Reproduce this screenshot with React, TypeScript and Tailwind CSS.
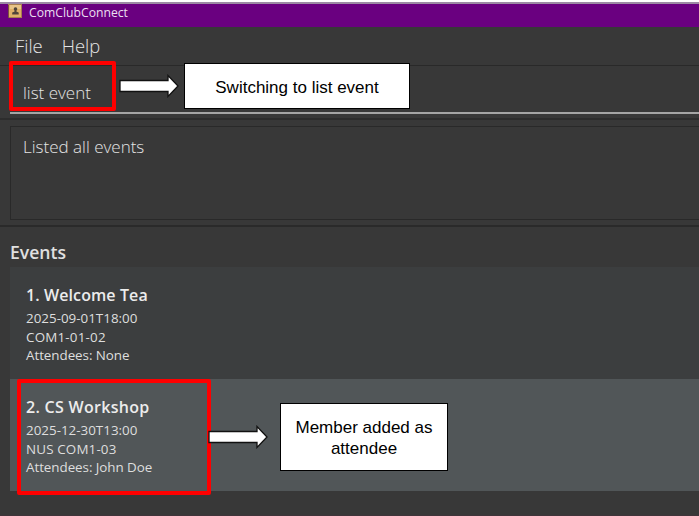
import type { ReactNode } from "react";

type ClubEvent = { title: string; date: string; place: string; attendees: string; selected: boolean };

const events: ClubEvent[] = [
  { title: "1. Welcome Tea", date: "2025-09-01T18:00", place: "COM1-01-02", attendees: "Attendees: None", selected: false },
  { title: "2. CS Workshop", date: "2025-12-30T13:00", place: "NUS COM1-03", attendees: "Attendees: John Doe", selected: true },
];

function AppIcon() {
  return (
    <svg width="15" height="15" viewBox="0 0 15 15" className="shrink-0">
      <rect x="0" y="0" width="14" height="14" fill="#a87f4e" />
      <rect x="1" y="1" width="12" height="12" fill="#deb068" />
      <rect x="2" y="1" width="11" height="4" fill="#e8c488" />
      <path d="M7.500 3.200a1.800 1.800 0 0 1 1.100 3.200c-.3.400-.3 1 .2 1.300l1.900.700v2.100H4.200V8.400l2-.7c.5-.3.5-.9.2-1.300A1.800 1.800 0 0 1 7.500 3.200z" fill="#51453a" />
      <path d="M.5 1v13" stroke="#7c5340" strokeWidth="1" />
    </svg>
  );
}

function Arrow({ className }: { className: string }) {
  return (
    <svg width="61" height="24" viewBox="0 0 61 24" className={"absolute " + className}>
      <path d="M1 6.500h48V1.500L59 12 49 22.500V17.500H1z" fill="#fff" stroke="#111" strokeWidth="1.300" />
    </svg>
  );
}

function Callout({ className, children }: { className: string; children: ReactNode }) {
  return (
    <div className={"absolute flex items-center justify-center border border-black bg-white pt-0.5 text-center font-['Liberation_Sans',Arial,sans-serif] text-[17px] leading-[21px] text-black " + className}>
      {children}
    </div>
  );
}

function EventCard({ event }: { event: ClubEvent }) {
  return (
    <li className={"h-28 pt-[17px] pl-4 text-[#dedede] " + (event.selected ? "bg-[#515658]" : "bg-[#3c3e3f]")}>
      <h2 className={"h-[25px] text-[16px] leading-[22px] font-semibold whitespace-nowrap text-[#ececec] " + (event.selected ? "tracking-[0.3px]" : "tracking-[0.1px]")}>{event.title}</h2>
      <div className="text-[13.400px] leading-[18.500px] whitespace-nowrap">
        <p>{event.date}</p>
        <p className={event.selected ? "tracking-[0.15px]" : "tracking-[0.2px]"}>{event.place}</p>
        <p className="tracking-[-0.05px]">{event.attendees}</p>
      </div>
    </li>
  );
}

export default function App() {
  return (
    <div className="relative flex h-[516px] w-[699px] flex-col overflow-hidden bg-[#383838] font-['Open_Sans','Noto_Sans',sans-serif]">
      <header className="flex h-[27px] shrink-0 items-start border-t-2 border-white bg-[#6a0080]">
        <div className="flex h-full w-full items-start border-t-2 border-[#9c8aa4] pl-2">
          <AppIcon />
          <span className="ml-1.5 pt-px text-[12.200px] leading-4 text-[#eadff0]">ComClubConnect</span>
        </div>
      </header>
      <nav className="flex h-[39px] shrink-0 items-center gap-[19px] border-b border-[#292929] pl-[15px] text-[18.400px] leading-6 font-light text-[#e4e4e4]">
        <span>File</span>
        <span>Help</span>
      </nav>
      <section className="flex h-[54px] shrink-0 flex-col border-b-2 border-[#2d2d2d] pl-2.5">
        <div className="flex h-12 items-end border-b-2 border-[#a5a5a5] pb-[7px] pl-[13px] text-[17px] leading-6 font-light text-[#e4e4e4]">
          list event
        </div>
      </section>
      <section className="h-[107px] shrink-0 border-b-2 border-[#2a2a2a] pt-1.5 pl-2.5">
        <div className="h-[94px] border border-r-0 border-[#292929] pt-2 pl-3 text-[17px] leading-6 font-light text-[#e4e4e4]">
          Listed all events
        </div>
      </section>
      <main className="pl-2.5">
        <h1 className="h-10 pt-[13px] text-[17.600px] leading-6 font-semibold text-[#e0e0e0]">Events</h1>
        <ul>
          {events.map((event) => <EventCard key={event.title} event={event} />)}
        </ul>
      </main>
      <div className="absolute bottom-0 left-0 h-px w-full bg-[#40343a]" />

      <div className="absolute top-[61px] left-[9px] h-[50px] w-[107px] rounded-[2px] border-4 border-[#ff0000]" />
      <Arrow className="top-[74px] left-[119px]" />
      <Callout className="top-[63px] left-[184px] h-[46px] w-[226px]">Switching to list event</Callout>
      <div className="absolute top-[379px] left-[17px] h-[116px] w-[194px] rounded-[2px] border-4 border-[#ff0000]" />
      <Arrow className="top-[425px] left-[208px]" />
      <Callout className="top-[403px] left-[280px] h-[68px] w-[168px]">
        <span>Member added as<br />attendee</span>
      </Callout>
    </div>
  );
}
